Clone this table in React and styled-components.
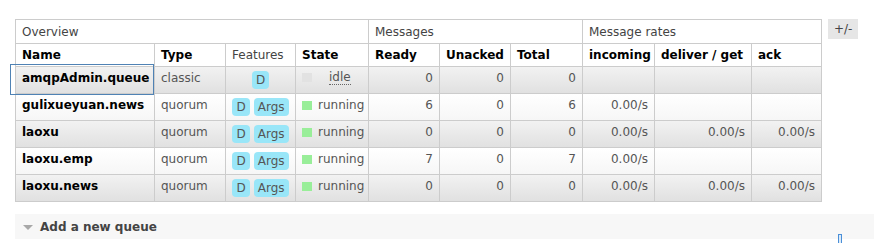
import React from "react";
import styled, { createGlobalStyle, css } from "styled-components";

const Global = createGlobalStyle`
  html, body { margin: 0; padding: 0; background: #fff; }
  body {
    font-family: "DejaVu Sans", Verdana, sans-serif;
    font-size: 12px;
    color: #484848;
    overflow: hidden;
  }
`;

const Page = styled.div`
  padding: 19px 0 0 15px;
  position: relative;
  height: 243px;
  box-sizing: border-box;
`;

const TableRow = styled.div`
  display: flex;
  align-items: flex-start;
  gap: 6px;
`;

const List = styled.table`
  border-collapse: collapse;
  table-layout: fixed;
  width: 806px;
`;

const GroupHead = styled.th`
  text-align: left;
  font-weight: normal;
  color: #444;
  background: #fff;
  border: 1px solid #ccc;
  padding: 0 6px;
  height: 23px;
`;

const ColHead = styled.th`
  text-align: left;
  font-weight: bold;
  color: #000;
  background: #fff;
  border: 1px solid #ccc;
  padding: 0 6px;
  height: 22px;
  white-space: nowrap;
`;

const Row = styled.tr`
  height: 27px;
  ${(p) =>
    p.$alt
      ? css`
          background: linear-gradient(#f2f2f2, #e0e0e0);
        `
      : css`
          background: linear-gradient(#ffffff, #f6f6f6);
        `}
`;

const Cell = styled.td`
  border: 1px solid #ccc;
  padding: 3px 6px 0;
  vertical-align: top;
  line-height: 16px;
  white-space: nowrap;
  text-align: ${(p) => p.$align || "left"};
  color: #555;
`;

const NameCell = styled(Cell)`
  font-weight: bold;
  color: #000;
  position: relative;
  ${(p) =>
    p.$focused &&
    css`
      &::after {
        content: "";
        position: absolute;
        left: -6px;
        top: -3px;
        right: 0;
        bottom: -2px;
        border: 1px solid #4f82b4;
      }
    `}
`;

const FeatureCell = styled(Cell)`
  text-align: center;
  padding: 4px 2px 0;
`;

const Badge = styled.span`
  display: inline-block;
  background: #99e6f8;
  color: #555;
  border-radius: 4px;
  padding: 0 4px;
  line-height: 18px;
  height: 18px;
  margin: 0 2px;
`;

const StateWrap = styled.span`
  display: inline-flex;
  align-items: center;
`;

const Swatch = styled.span`
  display: inline-block;
  width: 10px;
  height: 9px;
  margin-right: ${(p) => (p.$idle ? "17px" : "6px")};
  background: ${(p) => (p.$idle ? "#e2e2e2" : "#99ee99")};
`;

const Idle = styled.abbr`
  text-decoration: none;
  border-bottom: 1px dotted #666;
  line-height: 14px;
`;

const Toggle = styled.span`
  display: inline-block;
  background: #e6e6e6;
  color: #444;
  padding: 0 6px;
  line-height: 20px;
  height: 20px;
  font-size: 12px;
`;

const Section = styled.div`
  margin-top: 12px;
  height: 25px;
  background: #f7f7f7;
  display: flex;
  align-items: center;
  padding-left: 8px;
  gap: 7px;
  font-weight: bold;
  color: #444;
`;

const Arrow = styled.span`
  width: 0;
  height: 0;
  border-left: 5px solid transparent;
  border-right: 5px solid transparent;
  border-top: 5px solid #a8a8a8;
  margin-top: 1px;
`;

const Caret = styled.span`
  position: absolute;
  left: 838px;
  top: 234px;
  width: 2px;
  height: 8px;
  border: 1px solid #4a8fd8;
  background: #dbeaf8;
`;

const widths = [139, 71, 70, 73, 71, 71, 72, 72, 97, 70];

const queues = [
  { name: "amqpAdmin.queue", type: "classic", args: false, state: "idle", ready: 0, unacked: 0, total: 0, rates: null },
  { name: "gulixueyuan.news", type: "quorum", args: true, state: "running", ready: 6, unacked: 0, total: 6, rates: ["0.00/s", "", ""] },
  { name: "laoxu", type: "quorum", args: true, state: "running", ready: 0, unacked: 0, total: 0, rates: ["0.00/s", "0.00/s", "0.00/s"] },
  { name: "laoxu.emp", type: "quorum", args: true, state: "running", ready: 7, unacked: 0, total: 7, rates: ["0.00/s", "", ""] },
  { name: "laoxu.news", type: "quorum", args: true, state: "running", ready: 0, unacked: 0, total: 0, rates: ["0.00/s", "0.00/s", "0.00/s"] },
];

export default function App() {
  return (
    <>
      <Global />
      <Page>
        <TableRow>
          <List>
            <colgroup>
              {widths.map((w, i) => (
                <col key={i} style={{ width: w }} />
              ))}
            </colgroup>
            <thead>
              <tr>
                <GroupHead colSpan={4}>Overview</GroupHead>
                <GroupHead colSpan={3}>Messages</GroupHead>
                <GroupHead colSpan={3}>Message rates</GroupHead>
              </tr>
              <tr>
                <ColHead>Name</ColHead>
                <ColHead>Type</ColHead>
                <ColHead style={{ fontWeight: "normal", color: "#444" }}>Features</ColHead>
                <ColHead>State</ColHead>
                <ColHead>Ready</ColHead>
                <ColHead>Unacked</ColHead>
                <ColHead>Total</ColHead>
                <ColHead>incoming</ColHead>
                <ColHead>deliver / get</ColHead>
                <ColHead>ack</ColHead>
              </tr>
            </thead>
            <tbody>
              {queues.map((q, i) => (
                <Row key={q.name} $alt={i % 2 === 0}>
                  <NameCell $focused={i === 0}>{q.name}</NameCell>
                  <Cell>{q.type}</Cell>
                  <FeatureCell>
                    <Badge>D</Badge>
                    {q.args && <Badge>Args</Badge>}
                  </FeatureCell>
                  <Cell>
                    <StateWrap>
                      <Swatch $idle={q.state === "idle"} />
                      {q.state === "idle" ? <Idle>idle</Idle> : q.state}
                    </StateWrap>
                  </Cell>
                  <Cell $align="right">{q.ready}</Cell>
                  <Cell $align="right">{q.unacked}</Cell>
                  <Cell $align="right">{q.total}</Cell>
                  <Cell $align="right">{q.rates ? q.rates[0] : ""}</Cell>
                  <Cell $align="right">{q.rates ? q.rates[1] : ""}</Cell>
                  <Cell $align="right">{q.rates ? q.rates[2] : ""}</Cell>
                </Row>
              ))}
            </tbody>
          </List>
          <Toggle>+/-</Toggle>
        </TableRow>
        <Section>
          <Arrow />
          Add a new queue
        </Section>
        <Caret />
      </Page>
    </>
  );
}
